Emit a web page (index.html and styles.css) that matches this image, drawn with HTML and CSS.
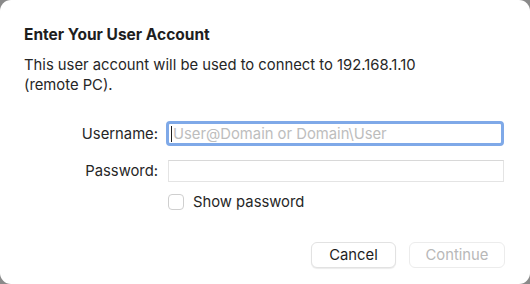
FILE: index.html
```html
<!DOCTYPE html>
<html>
<head>
<meta charset="utf-8">
<link rel="stylesheet" href="styles.css">
</head>
<body>
<div class="dialog">
  <h1 class="title">Enter Your User Account</h1>
  <p class="desc">This user account will be used to connect to 192.168.1.10<br>(remote PC).</p>
  <div class="form">
    <label class="label">Username:</label>
    <div class="field focus"><span class="caret"></span><span class="placeholder">User@Domain or Domain\User</span></div>
    <label class="label">Password:</label>
    <div class="field"></div>
    <span></span>
    <div class="check"><span class="box"></span><span>Show password</span></div>
  </div>
  <div class="buttons">
    <button class="btn">Cancel</button>
    <button class="btn disabled">Continue</button>
  </div>
</div>
</body>
</html>
```
FILE: styles.css
```css
html, body { margin: 0; padding: 0; }
body {
  width: 530px; height: 284px;
  background: #8a8a8a;
  font-family: Inter, "Liberation Sans", sans-serif;
  color: #222;
  overflow: hidden;
}
.dialog {
  box-sizing: border-box;
  width: 530px; height: 284px;
  background: #fff;
  border-radius: 11px;
  padding: 26px 24px 0 24px;
}
.title {
  margin: 0;
  font-size: 15.5px;
  font-weight: 700;
  line-height: 18px;
  color: #1e1e1e;
}
.desc {
  margin: 11px 0 0 0;
  font-size: 14.8px;
  line-height: 20px;
  color: #262626;
}
.form {
  margin-top: 26px;
  display: grid;
  grid-template-columns: 134px 336px;
  column-gap: 10px;
  row-gap: 14px;
  align-items: center;
}
.label {
  text-align: right;
  font-size: 14.8px;
  color: #262626;
}
.field {
  height: 22px;
  box-sizing: border-box;
  border: 1px solid #e4e4e4;
  border-top-color: #d8d8d8;
  background: #fff;
  display: flex;
  align-items: center;
  padding-left: 4px;
  font-size: 14.8px;
}
.field.focus {
  height: 25px;
  border: 3px solid #7fa9e8;
  border-radius: 4px;
  padding-left: 2px;
  margin-left: -2px;
}
.caret {
  width: 1px; height: 16px; background: #222; margin-right: 1px;
}
.placeholder { color: #bdbdbd; }
.check {
  display: flex;
  align-items: center;
  gap: 9px;
  font-size: 14.8px;
  color: #262626;
  margin-top: -3px;
}
.box {
  width: 14px; height: 14px;
  border: 1px solid #cfcfcf;
  border-radius: 4px;
  background: #fff;
}
.buttons {
  margin-top: 31px;
  display: flex;
  justify-content: flex-end;
  gap: 13px;
  padding-right: 1px;
}
.btn {
  font-family: inherit;
  font-size: 14.8px;
  height: 26px;
  border: 1px solid #e2e2e2;
  border-radius: 6px;
  background: #fff;
  color: #1e1e1e;
  box-shadow: 0 1px 1px rgba(0,0,0,0.08);
  padding: 0;
}
.btn:first-child { width: 85px; }
.btn.disabled { width: 96px; color: #b8b8b8; box-shadow: none; border-color: #ececec; }
```
